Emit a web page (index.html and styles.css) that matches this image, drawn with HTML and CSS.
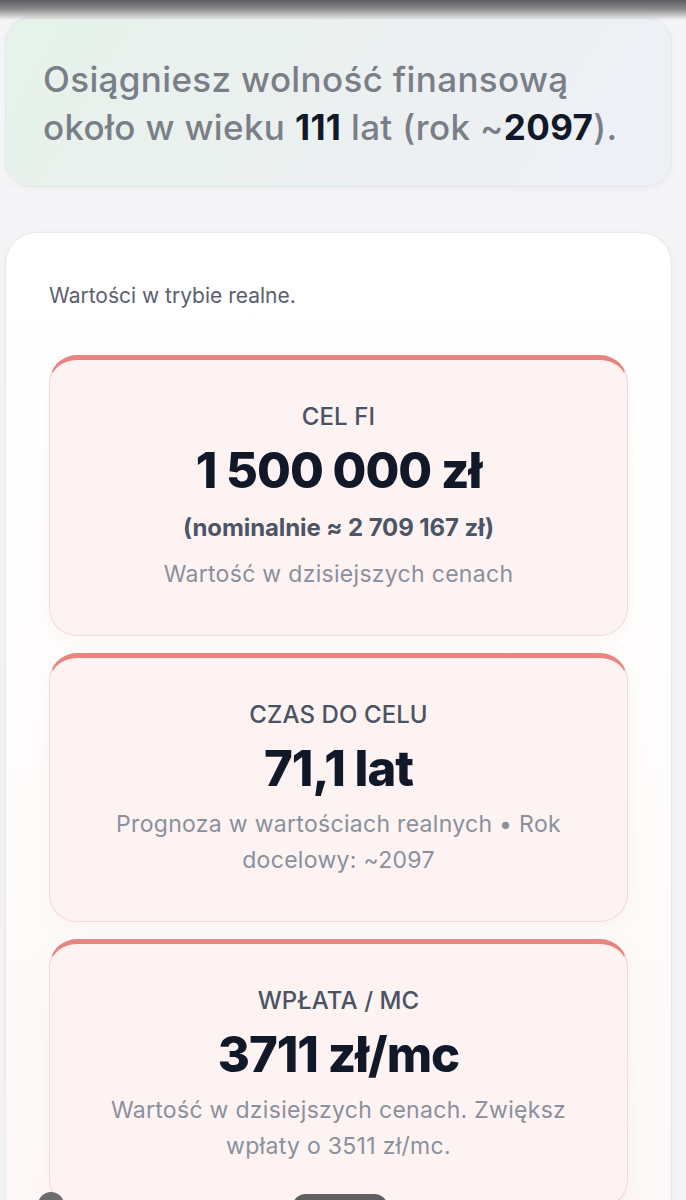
FILE: index.html
```html
<!DOCTYPE html>
<html lang="pl">
<head>
<meta charset="utf-8">
<title>Wolność finansowa</title>
<link rel="stylesheet" href="styles.css">
</head>
<body>
<div class="top-shade"></div>
<main class="page">
  <section class="banner">
    <p class="banner-text">Osiągniesz wolność finansową<br>około w wieku <strong>111</strong> lat (rok ~<strong>2097</strong>).</p>
  </section>

  <section class="panel">
    <p class="mode">Wartości w trybie realne.</p>
    <div class="stats">
      <article class="stat">
        <h3 class="stat-label">CEL FI</h3>
        <div class="stat-value">1 500 000 zł</div>
        <div class="stat-nominal">(nominalnie ≈ 2 709 167 zł)</div>
        <p class="stat-desc">Wartość w dzisiejszych cenach</p>
      </article>
      <article class="stat">
        <h3 class="stat-label">CZAS DO CELU</h3>
        <div class="stat-value">71,1 lat</div>
        <p class="stat-desc">Prognoza w wartościach realnych • Rok docelowy: ~2097</p>
      </article>
      <article class="stat">
        <h3 class="stat-label">WPŁATA / MC</h3>
        <div class="stat-value">3711 zł/mc</div>
        <p class="stat-desc">Wartość w dzisiejszych cenach. Zwiększ wpłaty o 3511 zł/mc.</p>
      </article>
    </div>
  </section>
</main>
<div class="fab-circle"></div>
<div class="fab-pill"></div>
</body>
</html>
```

FILE: styles.css
```css
* { box-sizing: border-box; }

html, body {
  margin: 0;
  padding: 0;
}

body {
  background: #f5f5f7;
  font-family: Inter, "Noto Sans", "Liberation Sans", sans-serif;
  color: #111827;
  overflow: hidden;
  height: 1200px;
}

.top-shade {
  position: fixed;
  top: 0;
  left: 0;
  right: 0;
  height: 20px;
  background: linear-gradient(to bottom, #5c5c5e 0%, #8a8a8c 45%, rgba(240,240,242,0) 100%);
  z-index: 5;
}

.page {
  padding: 17px 14px 0 5px;
  display: flex;
  flex-direction: column;
  gap: 45px;
}

.banner {
  height: 170px;
  border-radius: 26px;
  background: linear-gradient(120deg, #e6f2ea 0%, #ebf0f0 50%, #eef0f6 100%);
  border: 1px solid #e2e8e8;
  box-shadow: 0 2px 8px rgba(0,0,0,0.04);
  padding: 37px 20px 0 37px;
}

.banner-text {
  margin: 0;
  font-size: 35px;
  line-height: 48px;
  font-weight: 500;
  color: #7a7e87;
  letter-spacing: 0.35px;
  white-space: nowrap;
}

.banner-text strong {
  color: #111827;
  font-weight: 700;
}

.panel {
  background: linear-gradient(to bottom, #ffffff 0%, #fffdfd 40%, #fdf7f7 100%);
  border: 1px solid #e6e7ea;
  border-radius: 32px;
  padding: 48px 43px 40px 43px;
  box-shadow: 0 4px 18px rgba(0,0,0,0.04);
}

.mode {
  margin: 0 0 44px 0;
  font-size: 21px;
  line-height: 30px;
  color: #5a6070;
}

.stats {
  display: flex;
  flex-direction: column;
  gap: 17px;
}

.stat {
  background: #fdf3f3;
  border: 1px solid #f3d9d9;
  border-top: 5px solid #e8857f;
  border-radius: 28px;
  text-align: center;
  padding: 42px 35px 43px;
  box-shadow: 0 6px 18px rgba(230,150,150,0.08);
}

.stat-label {
  margin: 0;
  font-size: 24px;
  line-height: 30px;
  font-weight: 500;
  color: #4a5263;
  letter-spacing: 0.1px;
}

.stat-value {
  margin-top: 12px;
  font-size: 49px;
  line-height: 54px;
  font-weight: 800;
  color: #111827;
  letter-spacing: -1px;
}

.stat-nominal {
  margin-top: 15px;
  font-size: 24px;
  line-height: 30px;
  font-weight: 700;
  color: #4b5565;
  letter-spacing: -0.1px;
}

.stat-desc {
  margin: 10px 0 0 0;
  font-size: 23px;
  line-height: 36px;
  color: #8a909c;
  letter-spacing: 0.3px;
}

.stat-nominal + .stat-desc {
  margin-top: 13px;
}

.fab-circle {
  position: fixed;
  left: 38px;
  top: 1192px;
  width: 26px;
  height: 26px;
  border-radius: 50%;
  background: #6d6d70;
}

.fab-pill {
  position: fixed;
  left: 292px;
  top: 1194px;
  width: 96px;
  height: 30px;
  border-radius: 14px;
  background: #5f5f62;
}
```
